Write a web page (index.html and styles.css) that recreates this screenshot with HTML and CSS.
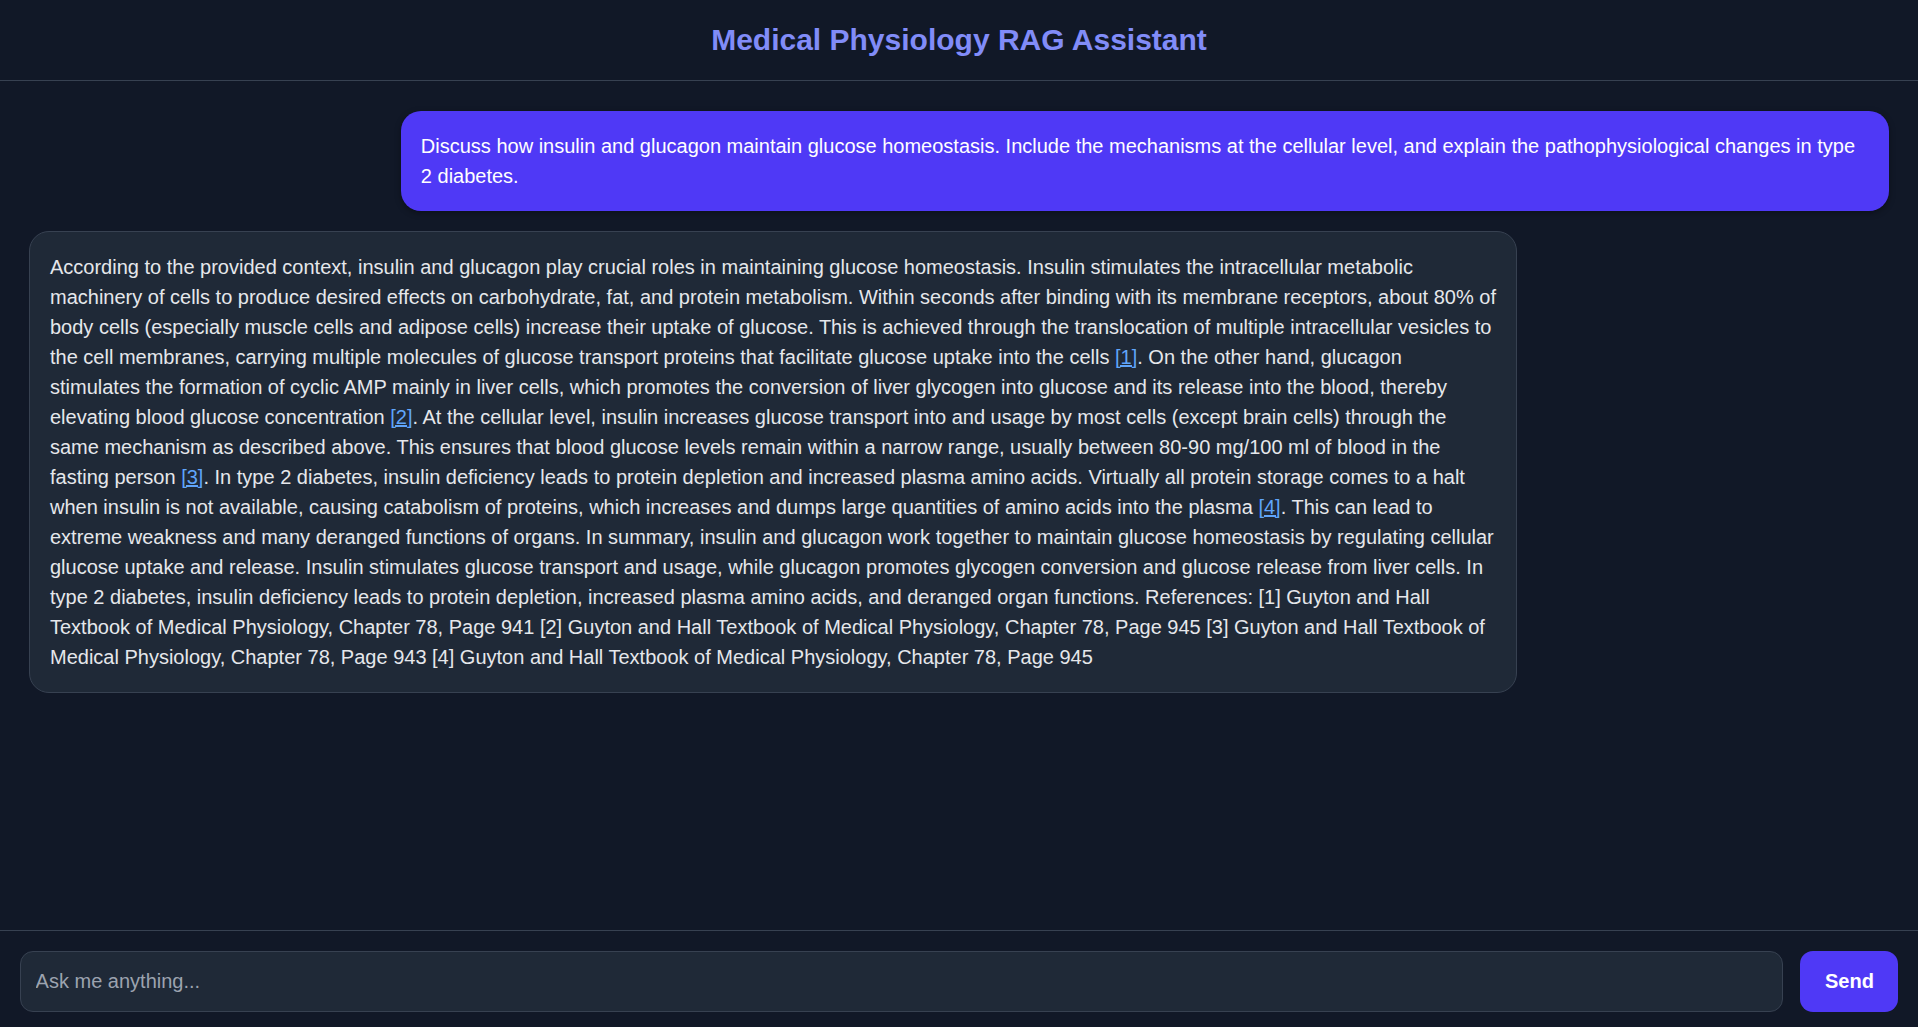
FILE: index.html
```html
<!DOCTYPE html>
<html lang="en">
<head>
<meta charset="utf-8">
<title>Medical Physiology RAG Assistant</title>
<link rel="stylesheet" href="styles.css">
</head>
<body>
<div class="app">
  <header class="header">
    <h1 class="title">Medical Physiology RAG Assistant</h1>
  </header>
  <main class="messages">
    <div class="msg msg-user">Discuss how insulin and glucagon maintain glucose homeostasis. Include the mechanisms at the cellular level, and explain the pathophysiological changes in type 2 diabetes.</div>
    <div class="msg msg-bot">According to the provided context, insulin and glucagon play crucial roles in maintaining glucose homeostasis. Insulin stimulates the intracellular metabolic machinery of cells to produce desired effects on carbohydrate, fat, and protein metabolism. Within seconds after binding with its membrane receptors, about 80% of body cells (especially muscle cells and adipose cells) increase their uptake of glucose. This is achieved through the translocation of multiple intracellular vesicles to the cell membranes, carrying multiple molecules of glucose transport proteins that facilitate glucose uptake into the cells <a class="cite" href="#">[1]</a>. On the other hand, glucagon stimulates the formation of cyclic AMP mainly in liver cells, which promotes the conversion of liver glycogen into glucose and its release into the blood, thereby elevating blood glucose concentration <a class="cite" href="#">[2]</a>. At the cellular level, insulin increases glucose transport into and usage by most cells (except brain cells) through the same mechanism as described above. This ensures that blood glucose levels remain within a narrow range, usually between 80-90 mg/100 ml of blood in the fasting person <a class="cite" href="#">[3]</a>. In type 2 diabetes, insulin deficiency leads to protein depletion and increased plasma amino acids. Virtually all protein storage comes to a halt when insulin is not available, causing catabolism of proteins, which increases and dumps large quantities of amino acids into the plasma <a class="cite" href="#">[4]</a>. This can lead to extreme weakness and many deranged functions of organs. In summary, insulin and glucagon work together to maintain glucose homeostasis by regulating cellular glucose uptake and release. Insulin stimulates glucose transport and usage, while glucagon promotes glycogen conversion and glucose release from liver cells. In type 2 diabetes, insulin deficiency leads to protein depletion, increased plasma amino acids, and deranged organ functions. References: [1] Guyton and Hall Textbook of Medical Physiology, Chapter 78, Page 941 [2] Guyton and Hall Textbook of Medical Physiology, Chapter 78, Page 945 [3] Guyton and Hall Textbook of Medical Physiology, Chapter 78, Page 943 [4] Guyton and Hall Textbook of Medical Physiology, Chapter 78, Page 945</div>
  </main>
  <footer class="composer">
    <input class="input" type="text" placeholder="Ask me anything...">
    <button class="send" type="button">Send</button>
  </footer>
</div>
</body>
</html>
```

FILE: styles.css
```css
* { box-sizing: border-box; }

html, body {
  margin: 0;
  padding: 0;
  height: 100%;
  background: #111827;
  font-family: "Liberation Sans", Arial, sans-serif;
  color: #e5e7eb;
}

.app {
  height: 100vh;
  display: flex;
  flex-direction: column;
}

.header {
  height: 81px;
  flex: 0 0 auto;
  border-bottom: 1px solid #374151;
  display: flex;
  align-items: center;
  justify-content: center;
}

.title {
  margin: 0;
  font-size: 30px;
  font-weight: 700;
  color: #818cf8;
  line-height: 1;
}

.messages {
  flex: 1 1 auto;
  min-height: 0;
  overflow: hidden;
  padding: 30px 29.4px;
  display: flex;
  flex-direction: column;
  gap: 19.6px;
}

.msg {
  max-width: 80%;
  font-size: 20px;
  line-height: 30px;
  padding: 20px 19.6px;
  border-radius: 20px;
}

.msg-user {
  align-self: flex-end;
  background: #4f39f6;
  color: #ffffff;
  box-shadow: 0 2px 6px rgba(0, 0, 0, 0.35);
}

.msg-bot {
  align-self: flex-start;
  background: #1f2937;
  border: 1px solid #374151;
  color: #e5e7eb;
}

.cite {
  color: #60a5fa;
  text-decoration: underline;
}

.composer {
  flex: 0 0 auto;
  border-top: 1px solid #374151;
  padding: 19.8px 19.6px 15.4px;
  display: flex;
  gap: 17.2px;
}

.input {
  flex: 1 1 auto;
  height: 61px;
  padding: 0 15px;
  font-family: "Liberation Sans", Arial, sans-serif;
  font-size: 20px;
  color: #e5e7eb;
  background: #1f2937;
  border: 1px solid #374151;
  border-radius: 13px;
  outline: none;
}

.input::placeholder {
  color: #9ca3af;
}

.send {
  flex: 0 0 auto;
  height: 61px;
  width: 98px;
  padding: 0;
  font-family: "Liberation Sans", Arial, sans-serif;
  font-size: 20px;
  font-weight: 700;
  color: #ffffff;
  background: #4f39f6;
  border: none;
  border-radius: 13px;
}
```
